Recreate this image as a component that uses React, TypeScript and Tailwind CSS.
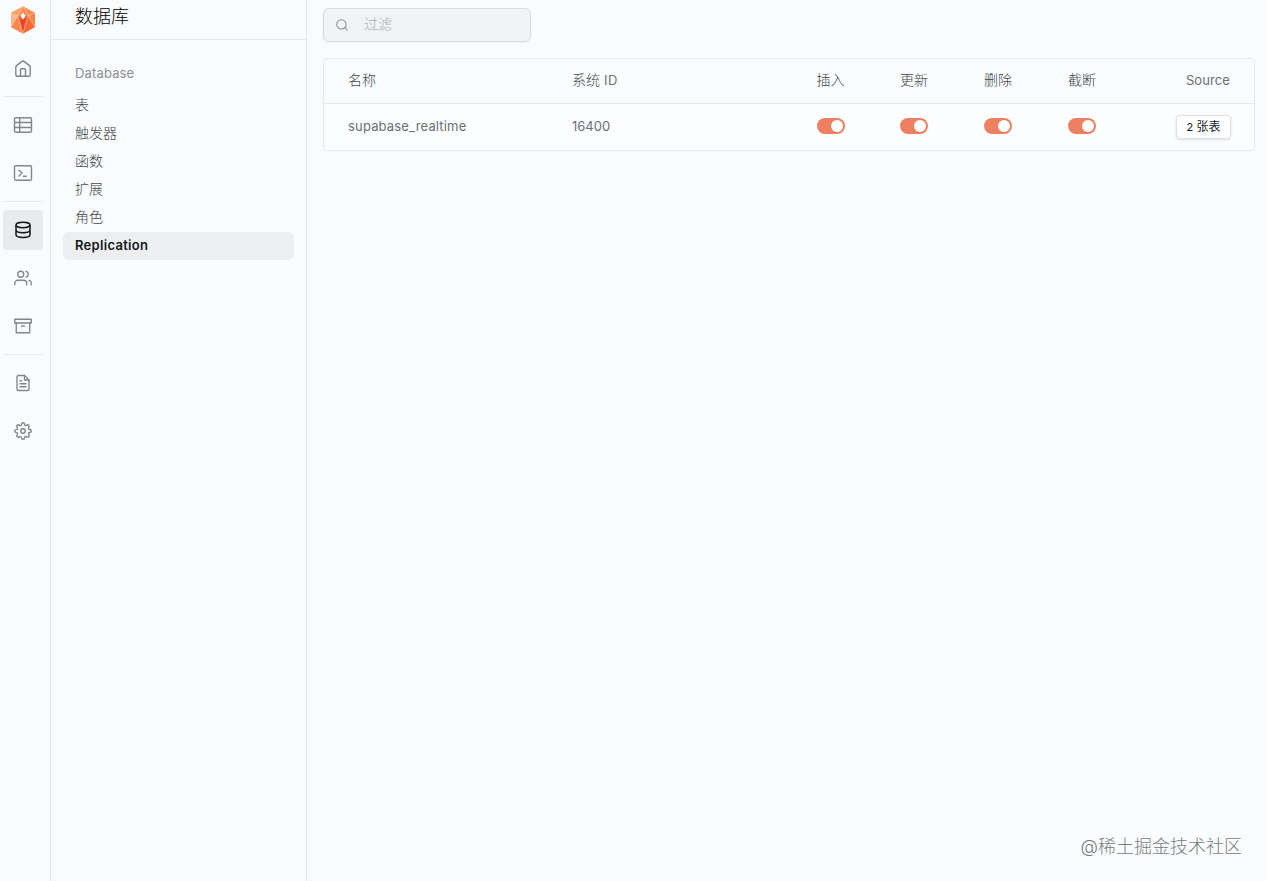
import { FiArchive, FiFileText, FiSearch, FiSettings, FiUsers } from "react-icons/fi";

const menu = ["表", "触发器", "函数", "扩展", "角色", "Replication"];
const columns = ["插入", "更新", "删除", "截断"];

function Logo() {
  return (
    <svg width="26" height="28" viewBox="0 0 26 28">
      <path d="M13 .5 25 7v14l-12 6.5L1 21V7z" fill="#f4733c" />
      <path d="M13 .5 8 10 1 7z" fill="#f9a068" />
      <path d="M13 .5 18 10l7-3z" fill="#f68e52" />
      <path d="M13 .5 8 10h10z" fill="#f98b4c" />
      <path d="M1 7l7 3-7 11z" fill="#fbb58a" />
      <path d="M25 7l-7 3 7 11z" fill="#f78149" />
      <path d="M1 21 8 10l5 17.5z" fill="#f88850" />
      <path d="M25 21 18 10l-5 17.5z" fill="#f76a35" />
      <path d="M8 10h10l-5 17.5z" fill="#f15a30" />
      <path d="M13 27.5 10.5 13h5z" fill="#ea4326" />
      <path d="M13 .5 1 21M13 .5 25 21M1 7l7 3 5 17.5L18 10l7-3" fill="none" stroke="#ffe3d0" strokeOpacity=".6" strokeWidth=".8" />
      <path d="M13 6.5 15.7 10 13 13.5 10.3 10z" fill="#fff" />
    </svg>
  );
}

function Home() {
  return (
    <svg width="18" height="18" viewBox="0 0 18 18" fill="none" stroke="currentColor" strokeWidth="1.4" strokeLinejoin="round" className="mt-px">
      <path d="M1.8 7.2c0-.7.3-1.2.8-1.6L7.9 1.4c.7-.5 1.5-.5 2.2 0l5.3 4.2c.5.4.8.9.8 1.6v7.6c0 .9-.6 1.5-1.5 1.5H3.3c-.9 0-1.5-.6-1.5-1.5z" />
      <path d="M6.5 16.2V9.6c0-.5.3-.8.8-.8h3.4c.5 0 .8.3.8.8v6.6" />
    </svg>
  );
}

function TableIcon() {
  return (
    <svg width="20" height="18" viewBox="0 0 20 18" fill="none" stroke="currentColor" strokeWidth="1.4">
      <rect x="1.5" y="1.7" width="17" height="14.6" rx="1.6" />
      <path d="M1.5 6.5h17M1.5 11.5h17M6.7 1.7v14.6" />
    </svg>
  );
}

function Terminal() {
  return (
    <svg width="20" height="18" viewBox="0 0 20 18" fill="none" stroke="currentColor" strokeWidth="1.4" strokeLinecap="round" strokeLinejoin="round">
      <rect x="1.5" y="1.7" width="17" height="14.6" rx="1.6" />
      <path d="m6 6.3 3 2.8-3 2.8M10.3 12.2h3" />
    </svg>
  );
}

function Database() {
  return (
    <svg width="18" height="18" viewBox="0 0 18 18" fill="none" stroke="currentColor" strokeWidth="1.5">
      <ellipse cx="9" cy="4" rx="7" ry="2.7" />
      <path d="M2 4v9.8c0 1.5 3.1 2.7 7 2.7s7-1.2 7-2.7V4M2 9c0 1.5 3.1 2.7 7 2.7S16 10.5 16 9" />
    </svg>
  );
}

function NavItem({ children, active }: any) {
  return (
    <div className={`flex h-10 w-10 items-center justify-center rounded ${active ? "bg-[#e8eaeb] text-[#11181c]" : "text-[#7f8789]"}`}>
      {children}
    </div>
  );
}

function Divider() {
  return <div className="h-px w-10 bg-[#e6e8eb]" />;
}

function Toggle() {
  return (
    <div className="flex h-4 w-7 items-center justify-end rounded-full bg-[#ed8060] px-0.5">
      <div className="h-3 w-3 rounded-full bg-white" />
    </div>
  );
}

export default function App() {
  return (
    <div className="relative flex h-[881px] w-[1266px] overflow-hidden bg-[#f9fbfc] font-['Inter','Noto_Sans_CJK_SC',sans-serif] text-[13px] text-[#687076]">
      {/* icon rail */}
      <div className="flex w-[51px] shrink-0 flex-col gap-2 border-r border-[#e6e8eb] pl-[3px]">
        <div className="flex h-10 w-10 items-center justify-center">
          <Logo />
        </div>
        <NavItem><Home /></NavItem>
        <Divider />
        <NavItem><TableIcon /></NavItem>
        <NavItem><Terminal /></NavItem>
        <Divider />
        <NavItem active><Database /></NavItem>
        <NavItem><FiUsers size={18} strokeWidth={1.8} /></NavItem>
        <NavItem><FiArchive size={18} strokeWidth={1.8} /></NavItem>
        <Divider />
        <NavItem><FiFileText size={18} strokeWidth={1.8} /></NavItem>
        <NavItem><FiSettings size={18} strokeWidth={1.8} /></NavItem>
      </div>

      {/* database menu */}
      <div className="w-64 shrink-0 border-r border-[#e6e8eb]">
        <div className="h-10 border-b border-[#e6e8eb] pl-6 text-lg leading-[34px] font-light text-black">数据库</div>
        <div className="px-3 pt-[23px]">
          <div className="mb-[9px] px-3 leading-5 tracking-[0.15px] text-[#889096]">Database</div>
          {menu.map((item) => (
            <div
              key={item}
              className={`h-7 rounded-md px-3 ${item === "Replication" ? "bg-[#eceeef] leading-[27px] font-semibold tracking-[0.3px] text-[#11181c]" : "text-sm leading-[26px] font-light text-[#41484d]"}`}
            >
              {item}
            </div>
          ))}
        </div>
      </div>

      {/* publications */}
      <div className="flex-1 pt-2 pr-[11px] pl-4">
        <div className="flex h-[34px] w-52 items-center rounded-md border border-[#d7dbdf] bg-[#f1f3f4] pl-[11px] shadow-xs">
          <FiSearch size={14} strokeWidth={1.8} className="text-[#889096]" />
          <span className="-mt-0.5 ml-[15px] text-sm font-light text-[#a9b0b5]">过滤</span>
        </div>

        <div className="mt-4 h-[93px] rounded border border-[#e6e8eb] bg-[#fcfdfe]">
          <div className="grid h-[45px] grid-cols-[224px_241px_83px_84px_84px_84px_1fr] items-center rounded-t border-b border-[#e6e8eb] bg-[#f9fbfc] pb-px">
            <div className="-mt-px pl-6 text-sm font-light text-[#41484d]">名称</div>
            <div className="pl-6 tracking-[0.4px]"><span className="text-sm font-light tracking-normal text-[#41484d]">系统</span> ID</div>
            {columns.map((name) => (
              <div key={name} className="-mt-px text-center text-sm font-light text-[#41484d]">{name}</div>
            ))}
            <div className="pr-6 text-right tracking-[0.1px]">Source</div>
          </div>
          <div className="grid h-[46px] grid-cols-[224px_241px_83px_84px_84px_84px_1fr] items-center">
            <div className="pl-6 tracking-[0.17px]">supabase_realtime</div>
            <div className="pl-6">16400</div>
            {columns.map((name) => (
              <div key={name} className="-mt-0.5 flex justify-center"><Toggle /></div>
            ))}
            <div className="flex justify-end pr-[23px]">
              <button className="h-6 w-[55px] rounded border border-[#dfe3e6] bg-white text-xs leading-5 text-[#11181c] shadow-sm">
                <span className="text-[11px]">2</span> 张表
              </button>
            </div>
          </div>
        </div>
      </div>

      <div className="absolute right-6 bottom-5 text-lg leading-7 font-light whitespace-nowrap text-[#777c80] [text-shadow:1px_1px_0_#fff]">@稀土掘金技术社区</div>
    </div>
  );
}
